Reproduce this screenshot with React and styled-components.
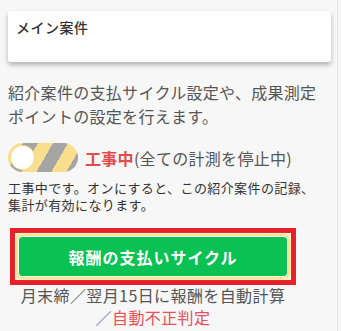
import React from "react";
import styled, { createGlobalStyle } from "styled-components";

const GlobalStyle = createGlobalStyle`
  html, body {
    margin: 0;
    padding: 0;
    background: #f7f7f7;
  }
  body {
    font-family: "Noto Sans CJK JP", "Noto Sans", sans-serif;
    color: #555;
  }
`;

const Page = styled.div`
  width: 338px;
  min-height: 331px;
  box-sizing: border-box;
  padding: 11px 6px 0 8px;
  border-right: 1px solid #e4e4e4;
`;

const Card = styled.div`
  background: #fff;
  border-radius: 3px;
  height: 51px;
  box-sizing: border-box;
  padding: 5px 8px;
  box-shadow: 0 3px 5px rgba(0, 0, 0, 0.28);
`;

const CardTitle = styled.div`
  font-size: 14px;
  font-weight: 500;
  color: #333;
  letter-spacing: 0.5px;
  line-height: 22px;
`;

const Lead = styled.p`
  margin: 18px 0 0;
  max-width: 316px;
  font-size: 16px;
  line-height: 24px;
  letter-spacing: 0.3px;
  color: #555;
`;

const ToggleRow = styled.div`
  display: flex;
  align-items: center;
  gap: 7px;
  margin-top: 15px;
`;

const Track = styled.div`
  position: relative;
  width: 70px;
  height: 29px;
  border-radius: 15px;
  background: repeating-linear-gradient(
    120deg,
    #f9df8d 0 13px,
    #a5a5a5 13px 26px
  );
`;

const Knob = styled.span`
  position: absolute;
  left: 3px;
  top: 3px;
  width: 23px;
  height: 23px;
  border-radius: 50%;
  background: #fff;
  box-shadow: 0 0 0 1px #f3d98a;
`;

const ToggleLabel = styled.span`
  font-size: 16px;
  color: #555;
  letter-spacing: 0.3px;
`;

const Warn = styled.span`
  color: ${(p) => p.$color || "#e34a4a"};
  font-weight: ${(p) => (p.$bold ? 700 : 400)};
`;

const Note = styled.p`
  margin: 7px 0 0;
  max-width: 316px;
  font-size: 13px;
  line-height: 17px;
  color: #333;
  letter-spacing: 0.4px;
`;

const Highlight = styled.div`
  margin: 15px 0 0 2px;
  width: 286px;
  box-sizing: border-box;
  border: 5px solid #e8202a;
  padding: 3px;
  background: #fef6dc;
`;

const CycleButton = styled.button`
  display: block;
  width: 100%;
  height: 41px;
  border: 1px solid #fff;
  border-radius: 4px;
  background: #0ac153;
  box-shadow: 0 0 2px 2px #fbe27c;
  color: #fff;
  font-family: inherit;
  font-size: 16px;
  font-weight: 700;
  letter-spacing: 1px;
  cursor: pointer;
`;

const Caption = styled.div`
  width: 290px;
  margin-top: -1px;
  text-align: center;
  font-size: 16px;
  line-height: 22px;
  color: #555;
  letter-spacing: 0.4px;
`;

export default function App() {
  return (
    <>
      <GlobalStyle />
      <Page>
        <Card>
          <CardTitle>メイン案件</CardTitle>
        </Card>
        <Lead>
          紹介案件の支払サイクル設定や、成果測定ポイントの設定を行えます。
        </Lead>
        <ToggleRow>
          <Track>
            <Knob />
          </Track>
          <ToggleLabel>
            <Warn $bold>工事中</Warn>(全ての計測を停止中)
          </ToggleLabel>
        </ToggleRow>
        <Note>
          工事中です。オンにすると、この紹介案件の記録、集計が有効になります。
        </Note>
        <Highlight>
          <CycleButton>報酬の支払いサイクル</CycleButton>
        </Highlight>
        <Caption>
          月末締／翌月15日に報酬を自動計算
          <br />
          <Warn $color="#5a6fb8">／</Warn>
          <Warn $color="#e8505b">自動不正判定</Warn>
        </Caption>
      </Page>
    </>
  );
}
